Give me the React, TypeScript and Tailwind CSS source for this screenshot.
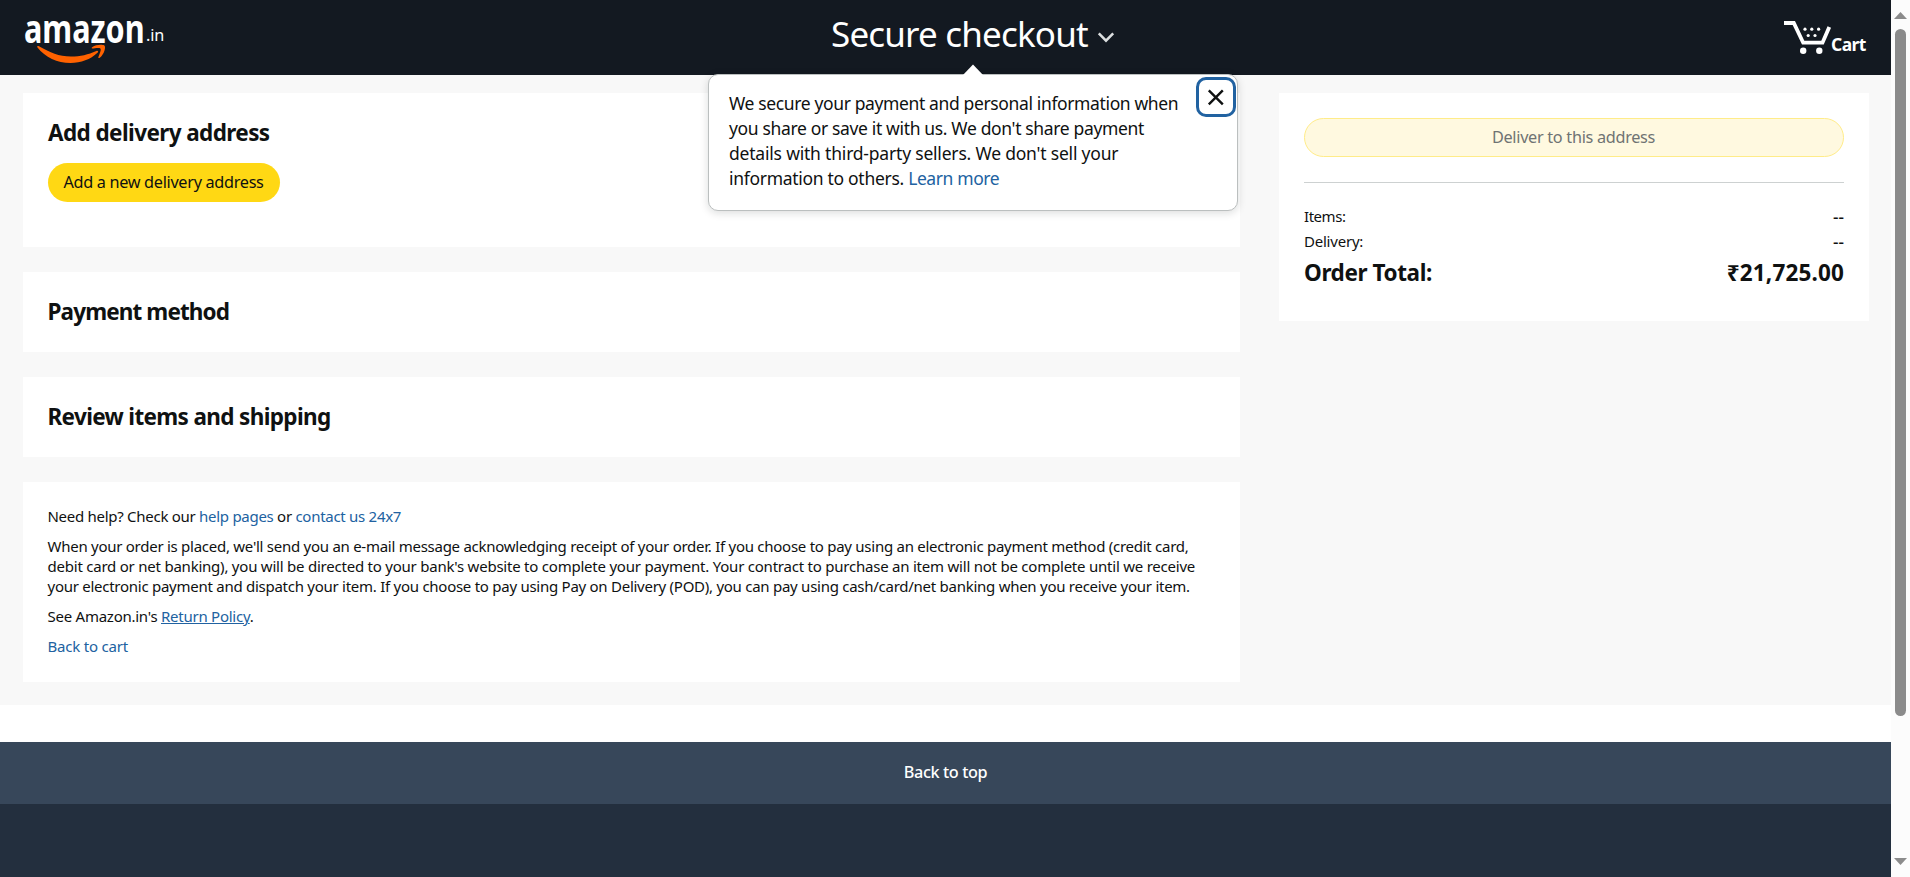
import type { ReactNode } from "react";

function Logo() {
  return (
    <span className="relative flex">
      <span className="block w-[123px] pl-px">
        <span className="inline-block origin-left scale-x-[0.785] text-[39px] leading-[56px] font-bold">amazon</span>
      </span>
      <svg width="72" height="22" viewBox="35 44 72 22" className="absolute top-11 left-3" fill="#ff6200">
        <path d="M37.300 47.200c-.4-1 .6-1.600 1.700-.9 11.500 6.600 19.500 10 32 10.200 9.500 0 17-2 25.300-5.600 1.600-.7 2.600.7 1.200 1.900C90.500 59.500 81 63 70.500 63 57 63 45.500 57.500 37.300 47.200z" />
        <path d="M92.200 48.600c-.9-.2-.7-1 .2-1.600 3.300-2.300 9.500-2.700 12-1.500 1.600.9.300 8.500-4.600 12.200-1 .8-1.800.3-1.400-.7 1-2.600 3-7.200 2.100-8.300-1-1.200-5.600-.5-8.300-.1z" />
      </svg>
      <span className="mt-[23px] text-[16.250px] leading-6 tracking-[-0.100px]">.in</span>
    </span>
  );
}

function CartIcon() {
  return (
    <svg width="48" height="36" viewBox="1784 20 48 36" className="block" fill="none">
      <path d="M1784 23h9.800l9.400 19.700h19.300l6.800-15.700" stroke="#fff" strokeWidth="3.800" />
      <g fill="#fff">
        <circle cx="1803.200" cy="50.700" r="3.200" />
        <circle cx="1819.300" cy="50.700" r="3.200" />
        <circle cx="1805" cy="29.200" r="1.600" />
        <circle cx="1811.800" cy="29.200" r="1.600" />
        <circle cx="1818.600" cy="29.200" r="1.600" />
        <circle cx="1808.200" cy="35.500" r="1.600" />
        <circle cx="1815" cy="35.500" r="1.600" />
      </g>
    </svg>
  );
}

function Header() {
  return (
    <header className="flex h-[75px] shrink-0 bg-[#131921] text-white">
      <a className="ml-[23px] block w-[143px]">
        <Logo />
      </a>
      <div className="relative ml-[664px] flex w-[284px] items-start">
        <h1 className="mt-[9px] ml-px text-[35px] leading-[50px] font-[450] tracking-[-0.820px] whitespace-nowrap">Secure checkout</h1>
        <svg width="18" height="12" viewBox="0 0 18 12" fill="none" className="mt-[31px] ml-[9px] shrink-0">
          <path d="M1.800 2.300l7.200 7.400 7.200-7.400" stroke="#dcdfe0" strokeWidth="2.500" />
        </svg>
        <SecurePopover />
      </div>
      <a className="mt-5 ml-[670px] flex">
        <CartIcon />
        <span className="mt-[12px] -ml-px text-[17.500px] leading-6 font-bold tracking-[-0.600px]">Cart</span>
      </a>
    </header>
  );
}

function SecurePopover() {
  return (
    <div className="absolute top-[74px] -left-[122px] z-10 flex h-[137px] w-[530px] rounded-[10px] border border-[#bbbfbf] bg-white pt-[16px] pl-5 text-[17.500px] leading-[25px] text-[#0f1111] shadow-[0_2px_8px_rgba(15,17,17,0.15)]">
      <svg width="22" height="12" viewBox="0 0 22 12" className="absolute -top-[11px] left-[253px]">
        <path d="M11 0.500L0.500 11.500h21z" fill="#fff" />
      </svg>
      <p className="whitespace-nowrap">
        <span className="tracking-[-0.370px]">We secure your payment and personal information when</span>
        <br />
        <span className="tracking-[-0.350px]">you share or save it with us. We don't share payment</span>
        <br />
        <span className="tracking-[-0.200px]">details with third-party sellers. We don't sell your</span>
        <br />
        <span className="tracking-[-0.300px]">
          information to others. <a className="tracking-[-0.400px] text-[#2162a1]">Learn more</a>
        </span>
      </p>
      <button className="absolute top-[2px] right-px flex size-10 items-center justify-center rounded-[10px] border-3 border-[#2162a1] bg-white">
        <svg width="18" height="18" viewBox="0 0 18 18" fill="none">
          <path d="M1.800 2.300l14 14M15.800 2.300l-14 14" stroke="#0f1111" strokeWidth="2.400" />
        </svg>
      </button>
    </div>
  );
}

function Card({ children, className }: { children: ReactNode; className: string }) {
  return <section className={"bg-white " + className}>{children}</section>;
}

function Link({ children, className = "" }: { children: ReactNode; className?: string }) {
  return <a className={"text-[#2162a1] " + className}>{children}</a>;
}

function Checkout() {
  return (
    <div className="flex flex-col gap-[25px]">
      <Card className="h-[154px] pt-[25px] pl-[25px]">
        <h2 className="text-[22.500px] leading-[30px] font-[660] tracking-[-0.600px]">Add delivery address</h2>
        <button className="mt-[15px] flex h-[39px] w-[232px] items-center justify-center rounded-full bg-[#ffd814] pr-px text-[16.250px] tracking-[-0.310px] whitespace-nowrap">
          Add a new delivery address
        </button>
      </Card>
      <Card className="h-20 pt-[25px] pl-[24.500px]">
        <h2 className="text-[22.500px] leading-[30px] font-[660] tracking-[-0.880px]">Payment method</h2>
      </Card>
      <Card className="h-20 pt-[25px] pl-[24.500px]">
        <h2 className="text-[22.500px] leading-[30px] font-[660] tracking-[-0.650px]">Review items and shipping</h2>
      </Card>
      <Card className="flex h-[200px] flex-col gap-2.5 pt-6 pl-[24.500px] text-[15px] leading-5 whitespace-nowrap">
        <p className="tracking-[-0.280px]">
          Need help? Check our <Link>help pages</Link> or <Link>contact us 24x7</Link>
        </p>
        <p>
          <span className="tracking-[-0.265px]">
            When your order is placed, we'll send you an e-mail message acknowledging receipt of your order. If you choose to pay
            using an electronic payment method (credit card,
          </span>
          <br />
          <span className="tracking-[-0.225px]">
            debit card or net banking), you will be directed to your bank's website to complete your payment. Your contract to
            purchase an item will not be complete until we receive
          </span>
          <br />
          <span className="tracking-[-0.264px]">
            your electronic payment and dispatch your item. If you choose to pay using Pay on Delivery (POD), you can pay using
            cash/card/net banking when you receive your item.
          </span>
        </p>
        <p className="tracking-[-0.250px]">
          See Amazon.in's <Link className="underline">Return Policy</Link>.
        </p>
        <p className="tracking-[-0.200px]">
          <Link>Back to cart</Link>
        </p>
      </Card>
    </div>
  );
}

function Summary() {
  return (
    <aside className="h-[228px] bg-white px-[25px] pt-[25px] text-[15px]">
      <button className="flex h-[39px] w-full items-center justify-center rounded-full border border-[#ffec89] bg-[#fff9e0] pr-px text-[16.250px] tracking-[-0.300px] text-[#6f7373]">
        Deliver to this address
      </button>
      <div className="mt-[25px] h-px bg-[#cdd1d1]" />
      <dl className="mt-[21px]">
        <div className="flex justify-between leading-[25px]">
          <dt className="tracking-[-0.450px]">Items:</dt>
          <dd className="text-[17px] font-medium">--</dd>
        </div>
        <div className="flex justify-between leading-[25px]">
          <dt className="tracking-[-0.220px]">Delivery:</dt>
          <dd className="text-[17px] font-medium">--</dd>
        </div>
        <div className="mt-1 flex justify-between text-[22.500px] leading-[30px]">
          <dt className="font-[660] tracking-[-0.400px]">Order Total:</dt>
          <dd className="font-bold tracking-[0.150px]">₹21,725.00</dd>
        </div>
      </dl>
    </aside>
  );
}

function Scrollbar() {
  return (
    <div className="flex w-[19px] shrink-0 flex-col items-center bg-[#fcfcfc]">
      <svg width="13" height="7" viewBox="0 0 13 7" className="mt-3 shrink-0">
        <path d="M6.500 0L13 7H0z" fill="#8b8b8b" />
      </svg>
      <div className="mt-2.5 h-[687px] w-[11px] shrink-0 rounded-full bg-[#8b8b8b]" />
      <svg width="13" height="7" viewBox="0 0 13 7" className="mt-auto mb-3 shrink-0">
        <path d="M6.500 7L13 0H0z" fill="#8b8b8b" />
      </svg>
    </div>
  );
}

export default function App() {
  return (
    <div className="flex h-[877px] w-[1910px] overflow-hidden bg-white font-['Noto_Sans',sans-serif] text-[#0f1111]">
      <div className="flex w-[1891px] flex-col">
        <Header />
        <main className="grid h-[630px] shrink-0 grid-cols-[1217px_590px] items-start gap-x-[39px] bg-[#f8f8f8] pt-[18px] pl-[23px]">
          <Checkout />
          <Summary />
        </main>
        <footer className="mt-[37px] flex flex-1 flex-col bg-[#232f3e]">
          <a className="flex h-[62px] items-center justify-center bg-[#37475a] pb-px text-[16.250px] font-medium tracking-[-0.390px] text-white">
            Back to top
          </a>
        </footer>
      </div>
      <Scrollbar />
    </div>
  );
}
